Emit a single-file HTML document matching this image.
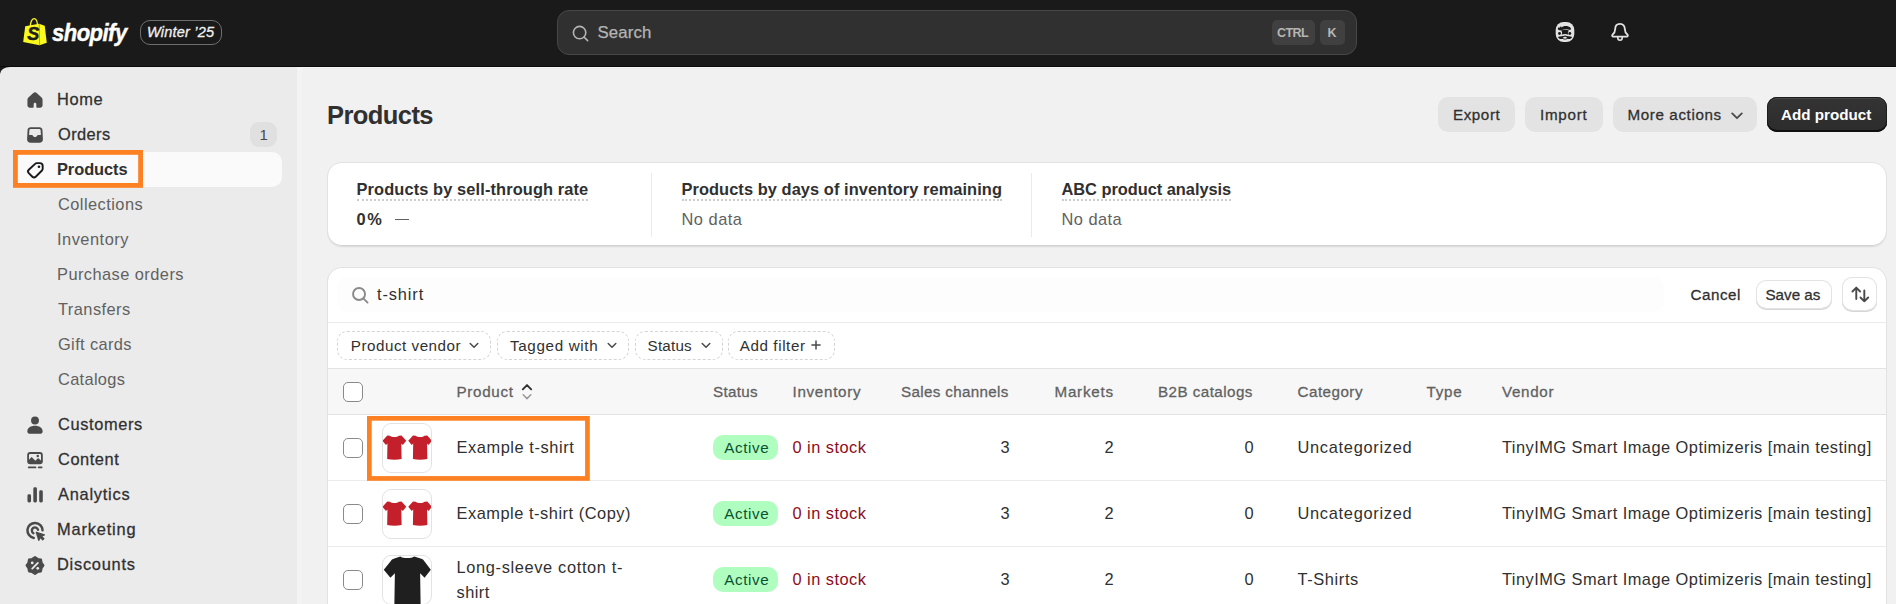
<!DOCTYPE html>
<html lang="en">
<head>
<meta charset="utf-8">
<title>Products · Shopify</title>
<style>
*{box-sizing:border-box;margin:0;padding:0}
html,body{width:1896px;height:604px;overflow:hidden;background:#f1f1f1}
body{font-family:"Liberation Sans",sans-serif;font-size:16.4px;color:#303030;position:relative;-webkit-font-smoothing:antialiased}
.abs{position:absolute}
.t{position:absolute;white-space:nowrap;line-height:20px;height:20px}
ul{list-style:none}

/* ---------- top bar ---------- */
.topbar{position:absolute;left:0;top:0;width:1896px;height:67px;background:#1a1a1a;box-shadow:inset 0 -1px 0 0 #0b0b0b}
.wordmark{left:51.600px;top:18.700px;font-size:24.500px;-webkit-text-stroke:.45px #fff;line-height:28px;height:28px;font-weight:700;font-style:italic;color:#fff;transform:scaleX(.9);transform-origin:0 0;letter-spacing:-.6px}
.edition{position:absolute;left:140px;top:20px;width:82px;height:25px;border:1px solid #6e6e6e;border-radius:10px}
.edition span{left:6px;top:1.100px;font-size:14.600px;font-style:italic;color:#f1f1f1;-webkit-text-stroke:.3px #f1f1f1}
.gsearch{position:absolute;left:557px;top:10px;width:800px;height:45px;background:#303030;border:1px solid #474747;border-radius:12px}
.gsearch .ph{left:39px;top:11.900px;font-size:16.800px;color:#b5b5b5;-webkit-text-stroke:.25px #b5b5b5}
.kbd{position:absolute;top:9px;height:25px;background:#404040;border-radius:5px}
.kbd span{top:3px;font-size:12.5px;font-weight:700;color:#b5b5b5;letter-spacing:.2px}

/* ---------- sidebar ---------- */
.sidebar{position:absolute;left:0;top:67px;width:297px;height:537px;background:#ebebeb;border-top-left-radius:10px 7px}
.topcorner{position:absolute;left:0;top:67px;width:20px;height:20px;background:#1a1a1a}
.nav li{position:absolute;left:14px;width:268px;height:34px;border-radius:10px}
.nav li.sel{background:#fafafa;height:35px}
.nav li .t{left:42.5px;top:7px;font-weight:700;color:#303030}
.md{font-weight:400 !important;-webkit-text-stroke:.28px currentColor}
.nav li.sub .t{font-weight:400;color:#616161}
.nav li.sel .t{font-weight:700}
.nav li svg{position:absolute;left:9px;top:5.5px;width:24px;height:24px}
.count{position:absolute;left:236px;top:5px;width:27px;height:25px;border-radius:9px;background:#e0e0e0}
.nav li .count .t{left:9.500px;top:2.500px;font-size:15px;color:#4a4a4a;font-weight:400}

/* ---------- main ---------- */
.scrollstrip{position:absolute;left:297px;top:67px;width:5px;height:537px;background:#f3f3f3}
h1{position:absolute;left:326.5px;top:100px;font-size:25.5px;line-height:30px;font-weight:700;white-space:nowrap;color:#303030}
.btn{position:absolute;top:97px;height:34.600px;border-radius:10px;background:#e3e3e3}
.btn .t{top:7.600px;font-weight:400;color:#303030}
.btn.primary{background:linear-gradient(#343434,#2c2c2c);box-shadow:inset 0 -2px 0 0 #111,inset 0 0 0 1px #1c1c1c,inset 0 2px 0 0 #474747}
.btn.primary .t{color:#fff;font-weight:700;top:8px}
.card{position:absolute;background:#fff;border-radius:14px;box-shadow:0 -1px 0 0 #e2e2e2,-1px 0 0 0 #e2e2e2,1px 0 0 0 #e2e2e2,inset 0 -1px 0 0 #d2d2d2,0 1px 1.500px 0 rgba(0,0,0,.1)}
.stat .h{font-weight:700;color:#303030;border-bottom:2px dotted #ccc;height:22.200px;line-height:20px}
.stat .v{color:#616161}
.vdiv{position:absolute;top:10px;width:1px;height:64px;background:#ebebeb}

/* index table */
.srch{position:absolute;left:9px;top:9px;width:1327px;height:35px;border-radius:10px;background:#fdfdfd}
.hline{position:absolute;left:0;width:100%;height:1px;background:#ebebeb}
.pill{position:absolute;top:63.200px;height:28.500px;border:1px dashed #d4d4d4;border-radius:10px}
.pill .t{top:3.5px;color:#303030}
.thead{position:absolute;left:0;top:100px;width:100%;height:47px;background:#f7f7f7;box-shadow:inset 0 1px 0 0 #e3e3e3,inset 0 -1px 0 0 #e3e3e3}
.thead .t{top:13.700px;color:#616161;font-size:15.2px}
.cb{position:absolute;left:15px;width:20px;height:20px;border:1px solid #8a8a8a;border-radius:5px;background:#fff}
.row{position:absolute;left:0;width:100%;height:66px;border-bottom:1px solid #ebebeb}
.row .t{top:22.300px}
.thumb{position:absolute;left:54px;top:8px;width:50px;height:50px;border:1px solid #e3e3e3;border-radius:9px;background:#fff;overflow:hidden}
.badge{position:absolute;left:385.200px;top:20px;width:65px;height:25px;border-radius:10px;background:#affebf}
.badge .t{left:10.5px;top:2.5px;color:#0c5132}
.red{color:#8e0b21}
.sbtn{background:#fff;border-radius:10px;box-shadow:inset 0 0 0 1px #e3e3e3,inset 0 -1px 0 0 #c8c8c8,0 1px 0 0 #d6d6d6}
.num{text-align:right}
.btn .t,.pill .t,.badge .t,#cn,#sa{font-size:15.2px}
</style>
<style id="fit">
#ed{left:5.95px;letter-spacing:0.172px}
#gs{left:39.45px;letter-spacing:0.152px}
#k1{left:5.95px;letter-spacing:-0.563px}
#k2{left:9.25px}
#n1{left:43.00px;letter-spacing:0.631px}
#n2{left:44.00px;letter-spacing:0.421px}
#n3{left:43.00px;letter-spacing:-0.060px}
#n4{left:44.00px;letter-spacing:0.453px}
#n5{left:43.00px;letter-spacing:0.497px}
#n6{left:43.00px;letter-spacing:0.446px}
#n7{left:44.00px;letter-spacing:0.448px}
#n8{left:44.00px;letter-spacing:0.374px}
#n9{left:44.00px;letter-spacing:0.315px}
#n10{left:44.00px;letter-spacing:0.619px}
#n11{left:44.00px;letter-spacing:0.558px}
#n12{left:44.00px;letter-spacing:0.751px}
#n13{left:43.00px;letter-spacing:0.819px}
#n14{left:43.00px;letter-spacing:0.741px}
#h1{left:327.10px;letter-spacing:-0.591px}
#b1{left:15.25px;letter-spacing:0.565px}
#b2{left:15.25px;letter-spacing:0.716px}
#b3{left:14.75px;letter-spacing:0.605px}
#b4{left:15.15px;letter-spacing:0.009px}
#s1{left:28.60px;letter-spacing:0.112px}
#s1v{left:29.75px;letter-spacing:1.584px}
#s2{left:353.20px;letter-spacing:0.067px}
#s2v{left:353.35px;letter-spacing:0.501px}
#s3{left:734.20px;letter-spacing:-0.032px}
#s3v{left:733.35px;letter-spacing:0.468px}
#q{left:49.75px;letter-spacing:0.880px}
#cn{left:1363.85px;letter-spacing:0.520px}
#sa{left:10.85px;letter-spacing:-0.014px}
#f1{left:12.15px;letter-spacing:0.520px}
#f2{left:13.05px;letter-spacing:0.659px}
#f3{left:12.36px;letter-spacing:0.208px}
#f4{left:10.96px;letter-spacing:0.603px}
#h0{left:128.75px;letter-spacing:0.680px}
#h1c{left:386.15px;letter-spacing:0.308px}
#h2c{left:464.75px;letter-spacing:0.703px}
#h3c{left:573.85px;letter-spacing:0.338px}
#h4c{left:726.65px;letter-spacing:0.747px}
#h5c{left:830.15px;letter-spacing:0.445px}
#h6c{left:970.95px;letter-spacing:0.481px}
#h7c{left:1099.65px;letter-spacing:0.774px}
#h8c{left:1175.15px;letter-spacing:0.684px}
#r1n{left:128.95px;letter-spacing:0.568px}
#r2n{left:128.95px;letter-spacing:0.520px}
#r3n{left:128.95px;letter-spacing:0.644px}
#r3n2{left:129.95px;letter-spacing:0.472px}
#r1b{left:11.06px;letter-spacing:0.618px}
#r1s{left:465.75px;letter-spacing:0.462px}
#r1c{left:659.57px}
#r1m{left:763.47px}
#r1g{left:902.67px}
#r1k{left:969.95px;letter-spacing:0.710px}
#r1v{left:1175.15px;letter-spacing:0.467px}
#r2b{left:11.06px;letter-spacing:0.618px}
#r2s{left:465.75px;letter-spacing:0.462px}
#r2c{left:659.57px}
#r2m{left:763.47px}
#r2g{left:902.67px}
#r2k{left:969.95px;letter-spacing:0.710px}
#r2v{left:1175.15px;letter-spacing:0.467px}
#r3b{left:11.06px;letter-spacing:0.618px}
#r3s{left:465.75px;letter-spacing:0.462px}
#r3c{left:659.57px}
#r3m{left:763.47px}
#r3g{left:902.67px}
#r3k{left:970.95px;letter-spacing:0.619px}
#r3v{left:1175.15px;letter-spacing:0.467px}
</style>
</head>
<body>

<header class="topbar">
  <svg class="abs" style="left:22px;top:16px;width:26px;height:31px" viewBox="22 16 26 31">
    <path d="M30.300 26.200C30.400 21.600 32.300 18.500 34.300 18.600C36 18.700 37.300 21.200 37.600 25.600" fill="none" stroke="#f4ef1c" stroke-width="1.300"/>
    <path d="M25.200 26.200L39.200 23.800L44.700 25.800L46.800 42.800L39.600 45.200L23.200 42z" fill="#fbf91e"/>
    <path d="M39.200 23.800L39.600 45.200" stroke="#8f8c12" stroke-width=".7"/>
    <text x="27.300" y="39.700" font-family="Liberation Sans, sans-serif" font-size="18" font-weight="700" font-style="italic" fill="#1f1f1a" stroke="#1f1f1a" stroke-width=".5">S</text>
  </svg>
  <span class="t wordmark" id="wm">shopify</span>
  <div class="edition"><span class="t" id="ed">Winter ’25</span></div>
  <div class="gsearch">
    <svg class="abs" style="left:13.400px;top:12.800px;width:20px;height:20px" viewBox="0 0 20 20"><circle cx="8.600" cy="8.600" r="6.200" fill="none" stroke="#b5b5b5" stroke-width="1.600"/><path d="M13.200 13.200L16.600 16.600" stroke="#b5b5b5" stroke-width="1.600" stroke-linecap="round"/></svg>
    <span class="t ph" id="gs">Search</span>
    <div class="kbd" style="left:713.500px;width:43px"><span class="t" id="k1" style="left:5.5px">CTRL</span></div>
    <div class="kbd" style="left:761.500px;width:25px"><span class="t" id="k2" style="left:8px">K</span></div>
  </div>
  <!-- avatar -->
  <svg class="abs" style="left:1554px;top:21px;width:22px;height:22px" viewBox="0 0 22 22">
    <rect x="1.700" y="1" width="18.600" height="20" rx="8" fill="#e3e3e3"/>
    <path fill="#1a1a1a" d="M3.600 7.700L5.100 5.700 5.400 7 7.100 5.100 7.400 6.600C9.200 4.600 14 4.400 16.600 6.800 17.200 7.700 16.900 8.600 16.200 9 13 7.700 10 8.100 7.200 9.300 5.600 9.600 4.200 9 3.600 7.700z"/>
    <path fill="#1a1a1a" d="M7 9.400C9.600 8.600 12.400 8.600 15 9.400 13.700 10.700 13.500 12.500 14.400 13.800 12.400 12.700 9.600 12.700 7.600 13.800 8.500 12.500 8.300 10.700 7 9.400z"/>
    <circle cx="5.500" cy="12.500" r="1.450" fill="#1a1a1a"/><circle cx="15.800" cy="12.500" r="1.450" fill="#1a1a1a"/>
    <path fill="#1a1a1a" d="M3.900 15.900C6 15.100 8.700 15.700 11 14.500 13.300 15.700 16 15.100 18.100 15.900 17 18 14.600 18.500 13.200 17.700 12 18.900 10 18.900 8.800 17.700 7.400 18.500 5 18 3.900 15.900z"/>
    <ellipse cx="11" cy="16.700" rx="1.900" ry="1" fill="#e3e3e3"/>
  </svg>
  <!-- bell -->
  <svg class="abs" style="left:1610px;top:22px;width:20px;height:20px" viewBox="0 0 20 20">
    <path d="M10 1.8 C6.8 1.8 5.2 4.2 5.2 7 C5.2 10 3.8 11.6 2.4 12.8 C1.8 13.4 2.2 14.6 3.2 14.6 L16.8 14.6 C17.8 14.6 18.2 13.4 17.6 12.8 C16.2 11.6 14.8 10 14.8 7 C14.8 4.2 13.2 1.8 10 1.8 Z" fill="none" stroke="#e3e3e3" stroke-width="1.8" stroke-linejoin="round"/>
    <path d="M7.8 15 L7.8 16 C7.8 17.4 8.8 18.2 10 18.2 C11.2 18.2 12.2 17.4 12.2 16 L12.2 15" fill="none" stroke="#e3e3e3" stroke-width="1.6"/>
  </svg>
</header>

<div class="topcorner"></div>
<nav class="sidebar">
  <ul class="nav">
    <li style="top:15px"><svg viewBox="0 0 20 20"><path fill="#4a4a4a" d="M10 3.500c-.5 0-1 .2-1.400.6L4.500 8c-.5.500-.8 1.100-.8 1.800v4.600c0 1.200.9 2.100 2.100 2.100h2.400c.4 0 .7-.3.7-.7v-2.500c0-.6.500-1.100 1.100-1.100s1.100.5 1.100 1.100v2.500c0 .4.300.7.700.7h2.400c1.200 0 2.100-.9 2.100-2.100V9.800c0-.7-.3-1.300-.8-1.800l-4.100-3.900c-.4-.4-.9-.6-1.400-.6z"/></svg><span class="t md" id="n1">Home</span></li>
    <li style="top:50px"><svg viewBox="0 0 20 20"><path fill="#4a4a4a" fill-rule="evenodd" d="M6.400 3.500h7.200a2.600 2.600 0 0 1 2.600 2.400l.4 7.600a2.800 2.800 0 0 1-2.800 3H6.200a2.800 2.800 0 0 1-2.800-3l.4-7.600A2.600 2.600 0 0 1 6.400 3.500zM5.300 6.300L5.100 10h2.300c.4 0 .7.200.9.600.3.700.9 1.100 1.700 1.100s1.400-.4 1.700-1.100c.2-.4.500-.6.900-.6h2.300l-.2-3.700A1.200 1.200 0 0 0 13.500 5.100h-7A1.200 1.200 0 0 0 5.300 6.300z"/></svg><span class="t md" id="n2">Orders</span><div class="count"><span class="t">1</span></div></li>
    <li class="sel" style="top:85px"><svg viewBox="0 0 20 20"><path fill="none" stroke="#1a1a1a" stroke-width="1.600" stroke-linejoin="round" d="M11.500 4.300h2.600a2.300 2.300 0 0 1 2.300 2.300V9a2 2 0 0 1-.6 1.400l-5.200 5.200a2 2 0 0 1-2.800 0l-3-3a2 2 0 0 1 0-2.800l5.300-4.900a2 2 0 0 1 1.400-.6z"/><circle cx="13.300" cy="7.300" r="1.100" fill="#1a1a1a"/></svg><span class="t" id="n3">Products</span></li>
    <li class="sub" style="top:120px"><span class="t" id="n4">Collections</span></li>
    <li class="sub" style="top:155px"><span class="t" id="n5">Inventory</span></li>
    <li class="sub" style="top:190px"><span class="t" id="n6">Purchase orders</span></li>
    <li class="sub" style="top:225px"><span class="t" id="n7">Transfers</span></li>
    <li class="sub" style="top:260px"><span class="t" id="n8">Gift cards</span></li>
    <li class="sub" style="top:295px"><span class="t" id="n9">Catalogs</span></li>
    <li style="top:340px"><svg viewBox="0 0 20 20"><circle cx="10" cy="6.300" r="3.300" fill="#4a4a4a"/><path fill="#4a4a4a" d="M3.600 15.400c0-2.900 2.900-4.700 6.400-4.700s6.400 1.800 6.400 4.700c0 1-.7 1.800-1.700 1.800H5.300c-1 0-1.700-.8-1.700-1.800z"/></svg><span class="t md" id="n10">Customers</span></li>
    <li style="top:375px"><svg viewBox="0 0 20 20"><rect x="3.500" y="3.400" width="13" height="10.200" rx="2.500" fill="#4a4a4a"/><path fill="#ebebeb" d="M5.900 4.900h8.200a.9.900 0 0 1 .9.900v4.700l-2.400-2.200-2.300 2.400-3.100-3.200L5 9.800v-4a.9.900 0 0 1 .9-.9z"/><circle cx="12.300" cy="6.700" r="1.050" fill="#4a4a4a"/><path stroke="#4a4a4a" stroke-width="1.500" stroke-linecap="round" d="M4.800 16.200h5.600M13.100 16.200h2.400"/></svg><span class="t md" id="n11">Content</span></li>
    <li style="top:410px"><svg viewBox="0 0 20 20"><rect x="3.700" y="9.400" width="3" height="6.800" rx="1.200" fill="#4a4a4a"/><rect x="8.600" y="3.600" width="3" height="12.600" rx="1.200" fill="#4a4a4a"/><rect x="13.500" y="6" width="3" height="10.200" rx="1.200" fill="#4a4a4a"/></svg><span class="t md" id="n12">Analytics</span></li>
    <li style="top:445px"><svg viewBox="0 0 20 20"><path fill="none" stroke="#4a4a4a" stroke-width="2.100" stroke-linecap="round" d="M16.300 10.200A6.300 6.300 0 1 0 9 16.600"/><path fill="none" stroke="#4a4a4a" stroke-width="2" stroke-linecap="round" d="M12.500 9.800A2.600 2.600 0 1 0 8.700 12.700"/><path fill="#4a4a4a" stroke="#4a4a4a" stroke-width="1.100" stroke-linejoin="round" d="M11.100 11.900l6.700 2.100-2.500 1.100 2.100 2.100-1 1-2.100-2.100-1.100 2.500z"/></svg><span class="t md" id="n13">Marketing</span></li>
    <li style="top:480px"><svg viewBox="0 0 20 20"><path fill="#4a4a4a" stroke="#4a4a4a" stroke-width="1.800" stroke-linejoin="round" d="M10.00 3.40L12.26 4.95L14.95 5.45L15.45 8.14L17.00 10.40L15.45 12.66L14.95 15.35L12.26 15.85L10.00 17.40L7.74 15.85L5.05 15.35L4.55 12.66L3.00 10.40L4.55 8.14L5.05 5.45L7.74 4.95z"/><path stroke="#ebebeb" stroke-width="1.500" stroke-linecap="round" d="M7.700 13l4.700-4.700"/><circle cx="7.700" cy="8.300" r="1.150" fill="#ebebeb"/><circle cx="12.300" cy="12.800" r="1.150" fill="#ebebeb"/></svg><span class="t md" id="n14">Discounts</span></li>
  </ul>
</nav>
<svg class="abs" style="left:13px;top:150px;width:130px;height:38px" viewBox="0 0 130 38"><rect x="2.400" y="2.400" width="125.200" height="33" fill="none" stroke="#fd8023" stroke-width="4.800"/></svg>

<main>
  <div class="abs" style="left:297px;top:67px;width:1599px;height:2px;background:linear-gradient(#f6f6f6 50%,#ececec 50%)"></div>
  <div class="scrollstrip"></div>
  <h1 id="h1">Products</h1>
  <div class="btn" style="left:1438px;width:77px"><span class="t md" id="b1" style="left:15px">Export</span></div>
  <div class="btn" style="left:1525px;width:78px"><span class="t md" id="b2" style="left:15px">Import</span></div>
  <div class="btn" style="left:1613px;width:144px"><span class="t md" id="b3" style="left:14.500px">More actions</span><svg class="abs chev" viewBox="0 0 12 8" style="left:118px;top:15px;width:12px;height:8px"><path d="M1.200 1.400L6 6.200l4.800-4.800" fill="none" stroke="#4a4a4a" stroke-width="1.800" stroke-linecap="round" stroke-linejoin="round"/></svg></div>
  <div class="btn primary" style="left:1767px;width:120px"><span class="t" id="b4" style="left:14px">Add product</span></div>

  <section class="card stat" style="left:328px;top:163px;width:1558px;height:83px">
    <span class="t h" id="s1" style="left:28.500px;top:15.800px">Products by sell-through rate</span>
    <span class="t" id="s1v" style="left:28.500px;top:46px;color:#303030;font-weight:700">0%</span>
    <div class="abs" style="left:66.500px;top:56.200px;width:14.500px;height:1.300px;background:#616161"></div>
    <div class="vdiv" style="left:323px"></div>
    <span class="t h" id="s2" style="left:353.500px;top:15.800px">Products by days of inventory remaining</span>
    <span class="t v" id="s2v" style="left:353.500px;top:46px">No data</span>
    <div class="vdiv" style="left:703px"></div>
    <span class="t h" id="s3" style="left:733.500px;top:15.800px">ABC product analysis</span>
    <span class="t v" id="s3v" style="left:733.500px;top:46px">No data</span>
  </section>

  <section class="card" style="left:328px;top:268px;width:1558px;height:400px">
    <div class="srch"></div>
    <svg class="abs" style="left:19.800px;top:14.700px;width:24px;height:24px" viewBox="0 0 20 20"><circle cx="9.200" cy="9.200" r="5" fill="none" stroke="#8a8a8a" stroke-width="1.600"/><path d="M13 13l3.300 3.300" stroke="#8a8a8a" stroke-width="1.600" stroke-linecap="round"/></svg>
    <span class="t" id="q" style="left:49px;top:15.700px">t-shirt</span>
    <span class="t md" id="cn" style="left:1362.500px;top:16.900px">Cancel</span>
    <div class="abs sbtn" style="left:1428px;top:12.300px;width:76px;height:29.200px"><span class="t md" id="sa" style="left:9.500px;top:4.600px">Save as</span></div>
    <div class="abs sbtn" style="left:1514px;top:9.400px;width:35px;height:34px">
      <svg class="abs" style="left:5.500px;top:5px;width:24px;height:24px" viewBox="0 0 20 20"><path d="M6.900 14.100V4.800M3.700 7.900l3.200-3.200 3.200 3.200M13.600 7v9M10.400 12.900l3.200 3.200 3.200-3.200" fill="none" stroke="#4a4a4a" stroke-width="1.600" stroke-linecap="round" stroke-linejoin="round"/></svg>
    </div>
    <div class="hline" style="top:54px"></div>

    <div class="pill" style="left:9.300px;width:153.300px"><span class="t" id="f1" style="left:12.500px">Product vendor</span><svg class="abs" viewBox="0 0 10 7" style="left:130.5px;top:10.300px;width:10px;height:7px"><path d="M1.200 1.500L5 5.300l3.800-3.800" fill="none" stroke="#4a4a4a" stroke-width="1.500" stroke-linecap="round" stroke-linejoin="round"/></svg></div>
    <div class="pill" style="left:168.500px;width:132px"><span class="t" id="f2" style="left:12.500px">Tagged with</span><svg class="abs" viewBox="0 0 10 7" style="left:109.2px;top:10.300px;width:10px;height:7px"><path d="M1.200 1.500L5 5.300l3.800-3.800" fill="none" stroke="#4a4a4a" stroke-width="1.500" stroke-linecap="round" stroke-linejoin="round"/></svg></div>
    <div class="pill" style="left:306.600px;width:88px"><span class="t" id="f3" style="left:12px">Status</span><svg class="abs" viewBox="0 0 10 7" style="left:65px;top:10.300px;width:10px;height:7px"><path d="M1.200 1.500L5 5.300l3.800-3.800" fill="none" stroke="#4a4a4a" stroke-width="1.500" stroke-linecap="round" stroke-linejoin="round"/></svg></div>
    <div class="pill" style="left:400.200px;width:106.500px"><span class="t" id="f4" style="left:10.500px">Add filter</span><svg class="abs" viewBox="0 0 12 12" style="left:81px;top:7.300px;width:12px;height:12px"><path d="M6 1.900v8.200M1.900 6h8.200" stroke="#4a4a4a" stroke-width="1.500" stroke-linecap="round"/></svg></div>

    <div class="thead">
      <div class="cb" style="top:14.200px"></div>
      <span class="t md" id="h0" style="left:128.500px">Product</span>
      <svg class="abs" viewBox="0 0 12 18" style="left:193px;top:14.600px;width:12px;height:18px"><path d="M1.800 6.300L6 2.100l4.200 4.200" fill="none" stroke="#303030" stroke-width="1.900" stroke-linecap="round" stroke-linejoin="round"/><path d="M2.200 11.800L6 15.600l3.800-3.800" fill="none" stroke="#9a9a9a" stroke-width="1.500" stroke-linecap="round" stroke-linejoin="round"/></svg>
      <span class="t md" id="h1c" style="left:385px">Status</span>
      <span class="t md" id="h2c" style="left:464.500px">Inventory</span>
      <span class="t md" id="h3c" style="left:573px">Sales channels</span>
      <span class="t md" id="h4c" style="left:726.500px">Markets</span>
      <span class="t md" id="h5c" style="left:830px">B2B catalogs</span>
      <span class="t md" id="h6c" style="left:969.500px">Category</span>
      <span class="t md" id="h7c" style="left:1098.500px">Type</span>
      <span class="t md" id="h8c" style="left:1174px">Vendor</span>
    </div>

    <div class="row" style="top:147px">
      <div class="cb" style="top:23.300px"></div>
      <div class="thumb"><svg class="abs" style="left:0;top:0;width:49.500px;height:49.500px" viewBox="0 0 50 50"><g fill="#c4202b"><path transform="translate(-.5 11.200) scale(1 1.03)" d="M7.500.6C9 2.300 15 2.300 16.500.6L19.200.3 24 5.600 20.500 9.700 19 8.300 19.300 23.400C15 24.400 9 24.400 4.700 23.400L5 8.300 3.500 9.700 0 5.600 4.800.3z"/><path transform="translate(25.500 11.200) scale(1 1.03)" d="M7.500.6C9 2.300 15 2.300 16.500.6L19.200.3 24 5.600 20.500 9.700 19 8.300 19.300 23.400C15 24.400 9 24.400 4.700 23.400L5 8.300 3.500 9.700 0 5.600 4.800.3z"/></g></svg></div>
      <span class="t" id="r1n" style="left:128.500px">Example t-shirt</span>
      <div class="badge"><span class="t" id="r1b">Active</span></div>
      <span class="t red" id="r1s" style="left:464.500px">0 in stock</span>
      <span class="t num" id="r1c" style="left:660px;width:21.500px">3</span>
      <span class="t num" id="r1m" style="left:764px;width:21.500px">2</span>
      <span class="t num" id="r1g" style="left:904px;width:21.500px">0</span>
      <span class="t" id="r1k" style="left:969.500px">Uncategorized</span>
      <span class="t" id="r1v" style="left:1174px">TinyIMG Smart Image Optimizeris [main testing]</span>
    </div>
    <div class="row" style="top:213px">
      <div class="cb" style="top:23.300px"></div>
      <div class="thumb"><svg class="abs" style="left:0;top:0;width:49.500px;height:49.500px" viewBox="0 0 50 50"><g fill="#c4202b"><path transform="translate(-.5 11.200) scale(1 1.03)" d="M7.500.6C9 2.300 15 2.300 16.500.6L19.200.3 24 5.600 20.500 9.700 19 8.300 19.300 23.400C15 24.400 9 24.400 4.700 23.400L5 8.300 3.500 9.700 0 5.600 4.800.3z"/><path transform="translate(25.500 11.200) scale(1 1.03)" d="M7.500.6C9 2.300 15 2.300 16.500.6L19.200.3 24 5.600 20.500 9.700 19 8.300 19.300 23.400C15 24.400 9 24.400 4.700 23.400L5 8.300 3.500 9.700 0 5.600 4.800.3z"/></g></svg></div>
      <span class="t" id="r2n" style="left:128.500px">Example t-shirt (Copy)</span>
      <div class="badge"><span class="t" id="r2b">Active</span></div>
      <span class="t red" id="r2s" style="left:464.500px">0 in stock</span>
      <span class="t num" id="r2c" style="left:660px;width:21.500px">3</span>
      <span class="t num" id="r2m" style="left:764px;width:21.500px">2</span>
      <span class="t num" id="r2g" style="left:904px;width:21.500px">0</span>
      <span class="t" id="r2k" style="left:969.500px">Uncategorized</span>
      <span class="t" id="r2v" style="left:1174px">TinyIMG Smart Image Optimizeris [main testing]</span>
    </div>
    <div class="row" style="top:279px">
      <div class="cb" style="top:23.300px"></div>
      <div class="thumb"><svg class="abs" style="left:0;top:0;width:49.500px;height:49.500px" viewBox="0 0 50 50"><path fill="#1f1f1f" transform="translate(0 -1)" d="M17.500 1.500C20 3.600 29 3.600 31.500 1.500L38 3.500C40 4 41 5 42 6.500L48.300 15 42 23 37.500 18.500 38 50H11.500L12 18.500 7.500 23 .8 15 7.500 6.500C8.500 5 9.500 4 11.500 3.500z"/></svg></div>
      <span class="t" id="r3n" style="left:128.500px;top:10.200px">Long-sleeve cotton t-</span><span class="t" id="r3n2" style="left:128.500px;top:34.700px">shirt</span>
      <div class="badge"><span class="t" id="r3b">Active</span></div>
      <span class="t red" id="r3s" style="left:464.500px">0 in stock</span>
      <span class="t num" id="r3c" style="left:660px;width:21.500px">3</span>
      <span class="t num" id="r3m" style="left:764px;width:21.500px">2</span>
      <span class="t num" id="r3g" style="left:904px;width:21.500px">0</span>
      <span class="t" id="r3k" style="left:969.500px">T-Shirts</span>
      <span class="t" id="r3v" style="left:1174px">TinyIMG Smart Image Optimizeris [main testing]</span>
    </div>

  </section>
  <svg class="abs" style="left:367px;top:416px;width:223px;height:65px" viewBox="0 0 223 65"><rect x="2.350" y="2.350" width="218.100" height="60.100" fill="none" stroke="#fd8023" stroke-width="4.700"/></svg>
</main>

</body>
</html>
